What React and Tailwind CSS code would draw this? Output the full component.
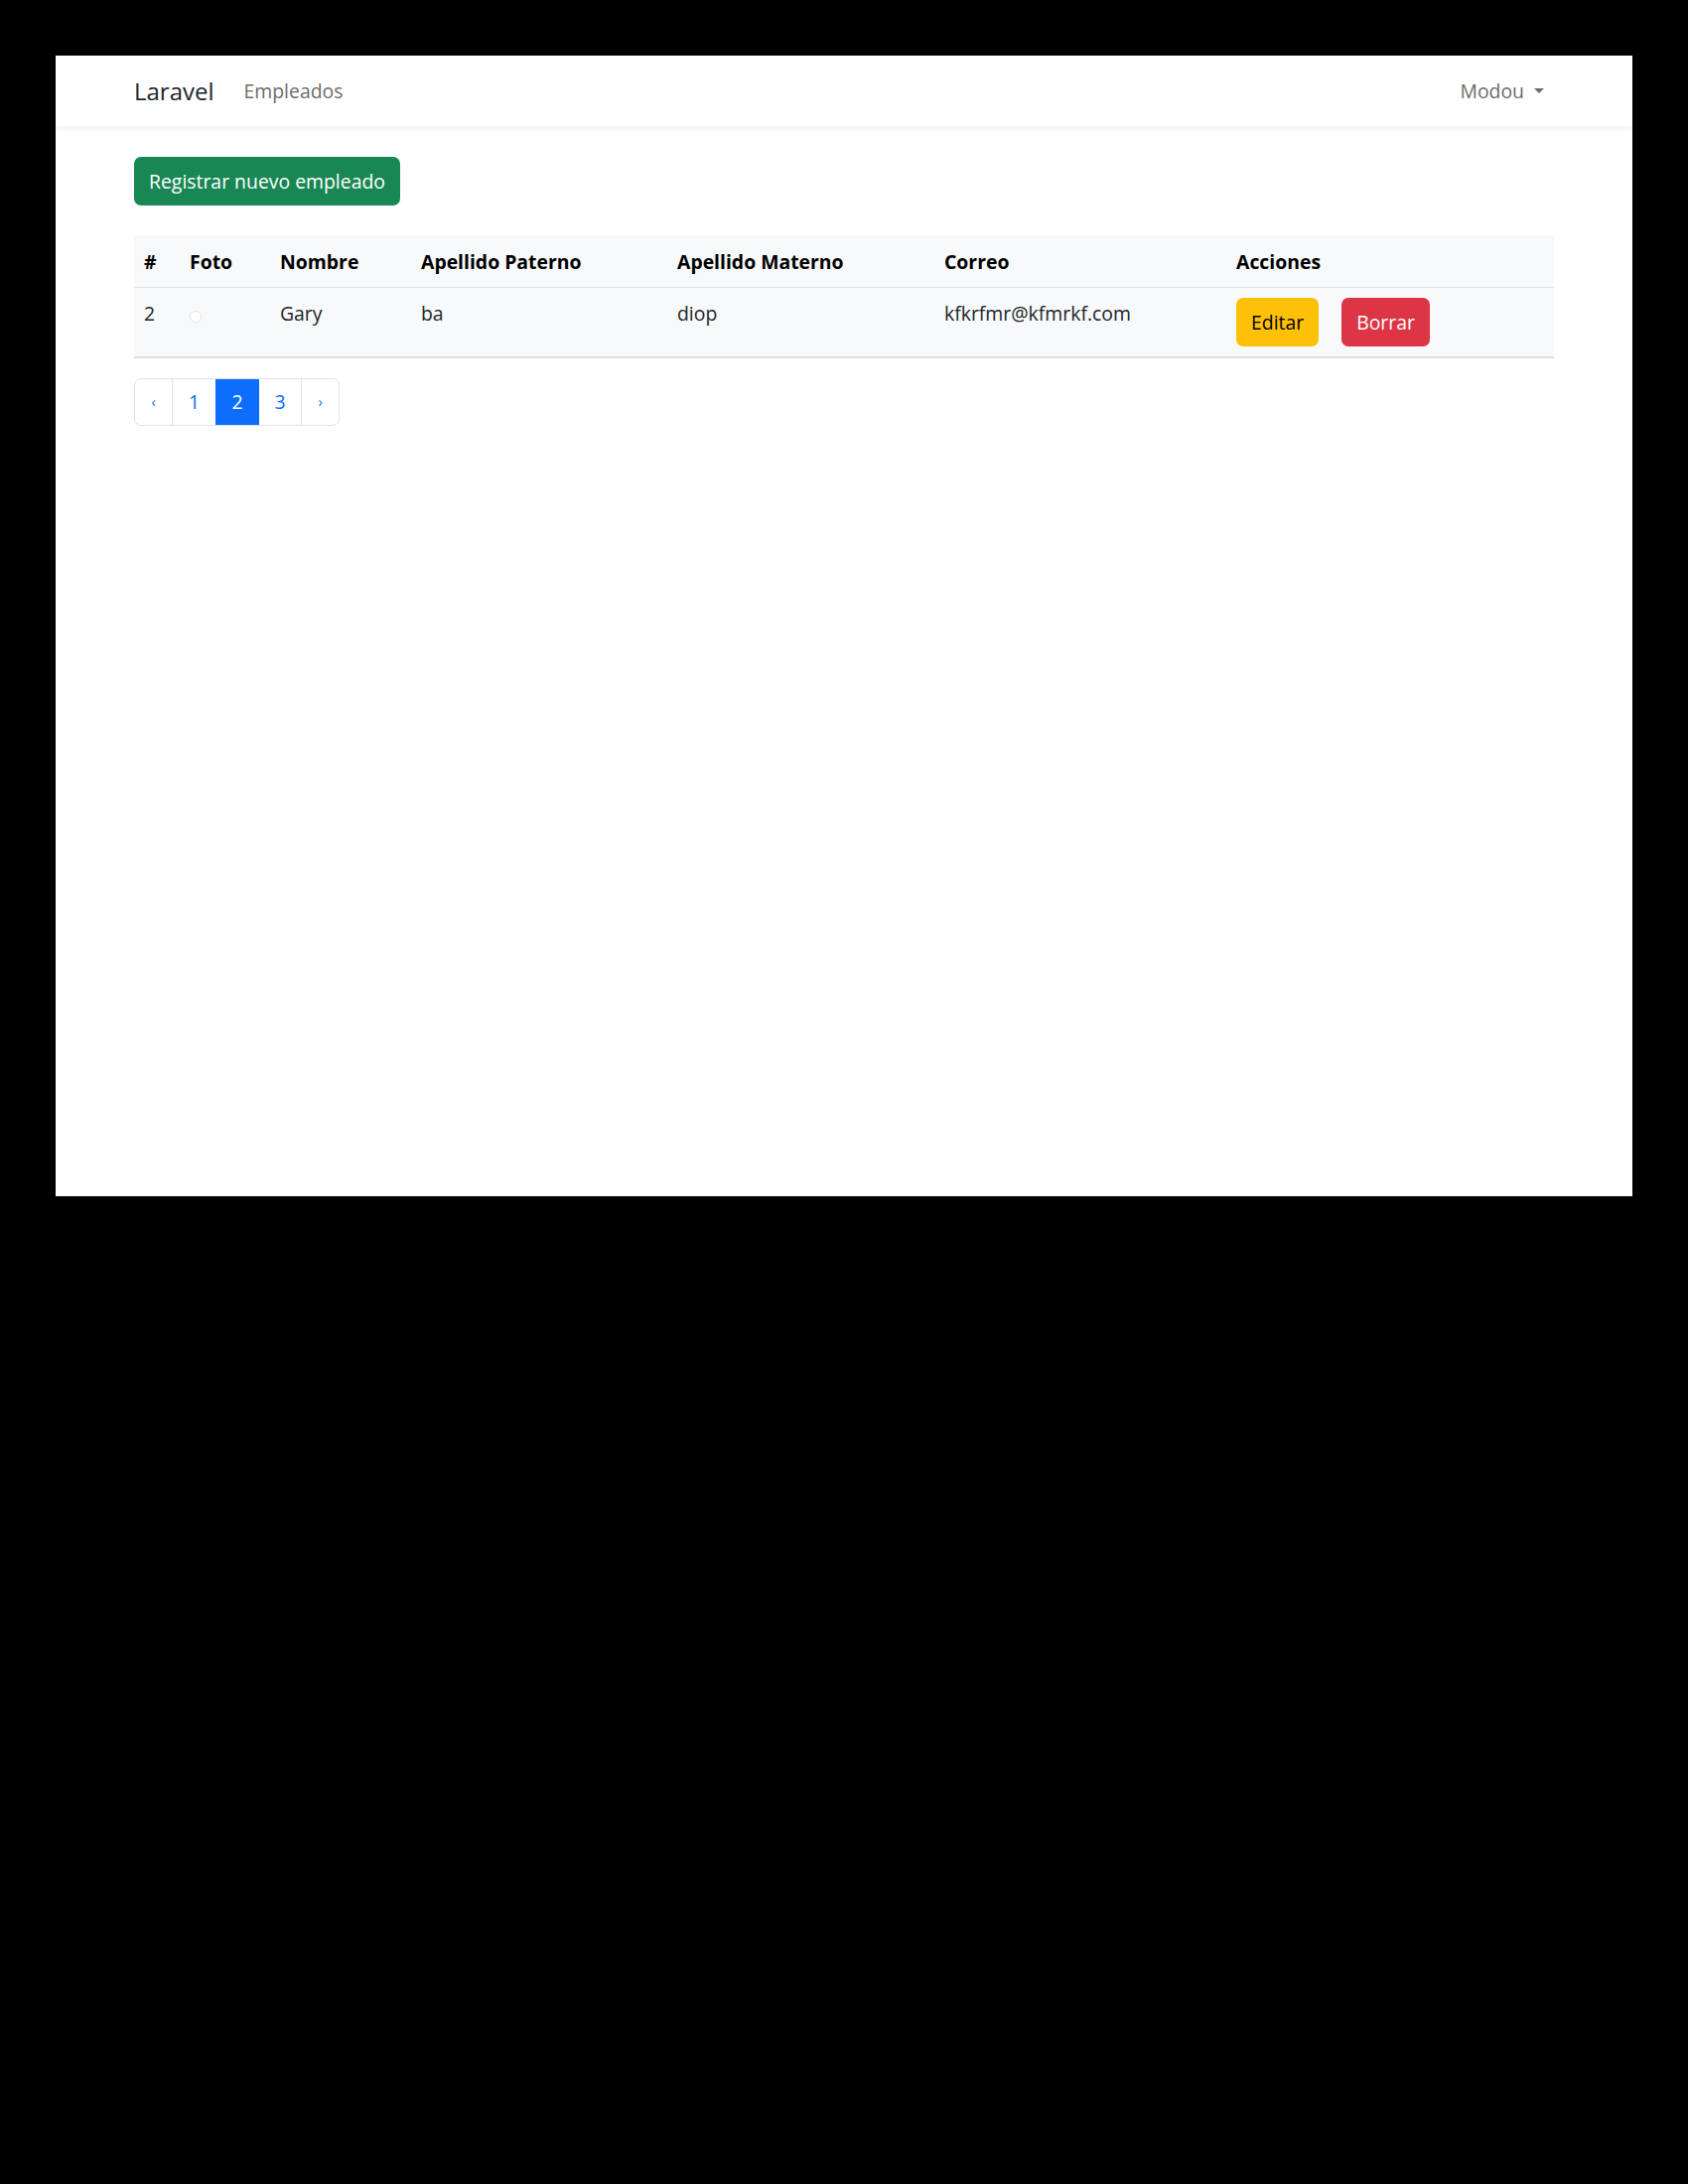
const empleados = [
  {
    id: 2,
    nombre: "Gary",
    paterno: "ba",
    materno: "diop",
    correo: "kfkrfmr@kfmrkf.com",
  },
];

const font = { fontFamily: '"Open Sans", "Noto Sans", sans-serif' };

function Navbar() {
  return (
    <nav className="bg-white h-[71px] shadow-[0_3px_6px_rgba(0,0,0,0.06)] relative z-10">
      <div className="h-full px-[79px] flex items-center justify-between">
        <div className="flex items-center">
          <a className="text-[24px] text-[#212529] mr-[20px] leading-none">
            Laravel
          </a>
          <a className="text-[19.4px] text-[#6c6c6c] px-[10px] leading-none">
            Empleados
          </a>
        </div>
        <a className="text-[19.4px] text-[#6c6c6c] px-[10px] flex items-center leading-none">
          Modou
          <span className="ml-[10px] w-0 h-0 border-t-[5px] border-t-[#6c6c6c] border-x-[5px] border-x-transparent" />
        </a>
      </div>
    </nav>
  );
}

function Pagination() {
  return (
    <div className="flex mt-[20px] text-[19.4px] leading-none">
      <div className="flex h-[48px] border border-[#dee2e6] rounded-[7px] overflow-hidden">
        <a className="w-[37px] flex items-center justify-center text-[#0d6efd] text-[14px]">
          ‹
        </a>
        <a className="w-[44px] flex items-center justify-center text-[#0d6efd] border-l border-[#dee2e6]">
          1
        </a>
        <a className="w-[44px] flex items-center justify-center bg-[#0d6efd] text-white">
          2
        </a>
        <a className="w-[42px] flex items-center justify-center text-[#0d6efd]">
          3
        </a>
        <a className="w-[38px] flex items-center justify-center text-[#0d6efd] text-[14px] border-l border-[#dee2e6]">
          ›
        </a>
      </div>
    </div>
  );
}

export default function App() {
  return (
    <div className="bg-black min-h-[2200px] p-[56px]" style={font}>
      <div className="bg-white h-[1149px]">
        <Navbar />

        <div className="px-[79px] pt-[31px]">
          <button className="bg-[#198754] text-white text-[19.4px] leading-[30px] h-[49px] px-[15px] rounded-[7px]">
            Registrar nuevo empleado
          </button>

          <table className="w-full mt-[30px] table-fixed text-[19.4px] leading-[30px] text-[#212529] bg-[#f8f9fa] border-collapse">
            <colgroup>
              <col className="w-[46px]" />
              <col className="w-[91px]" />
              <col className="w-[142px]" />
              <col className="w-[258px]" />
              <col className="w-[269px]" />
              <col className="w-[294px]" />
              <col />
            </colgroup>
            <thead>
              <tr className="text-left text-black border-b border-[#dee2e6]">
                <th className="px-[10px] pt-[12px] pb-[10px] font-bold">#</th>
                <th className="px-[10px] pt-[12px] pb-[10px] font-bold">Foto</th>
                <th className="px-[10px] pt-[12px] pb-[10px] font-bold">Nombre</th>
                <th className="px-[10px] pt-[12px] pb-[10px] font-bold">Apellido Paterno</th>
                <th className="px-[10px] pt-[12px] pb-[10px] font-bold">Apellido Materno</th>
                <th className="px-[10px] pt-[12px] pb-[10px] font-bold">Correo</th>
                <th className="px-[10px] pt-[12px] pb-[10px] font-bold">Acciones</th>
              </tr>
            </thead>
            <tbody>
              {empleados.map((e) => (
                <tr key={e.id} className="border-b-2 border-[#dfe0e1] align-top">
                  <td className="px-[10px] pt-[11px]">{e.id}</td>
                  <td className="px-[10px] pt-[11px]">
                    <div className="w-[12px] h-[12px] mt-[12px] rounded-full border border-[#e3e5e8] bg-white" />
                  </td>
                  <td className="px-[10px] pt-[11px]">{e.nombre}</td>
                  <td className="px-[10px] pt-[11px]">{e.paterno}</td>
                  <td className="px-[10px] pt-[11px]">{e.materno}</td>
                  <td className="px-[10px] pt-[11px]">{e.correo}</td>
                  <td className="px-[10px] py-[10px]">
                    <div className="flex gap-[23px]">
                      <button className="bg-[#ffc107] text-black px-[15px] h-[49px] rounded-[7px] leading-[30px]">
                        Editar
                      </button>
                      <button className="bg-[#dc3545] text-white px-[15px] h-[49px] rounded-[7px] leading-[30px]">
                        Borrar
                      </button>
                    </div>
                  </td>
                </tr>
              ))}
            </tbody>
          </table>

          <Pagination />
        </div>
      </div>
    </div>
  );
}
